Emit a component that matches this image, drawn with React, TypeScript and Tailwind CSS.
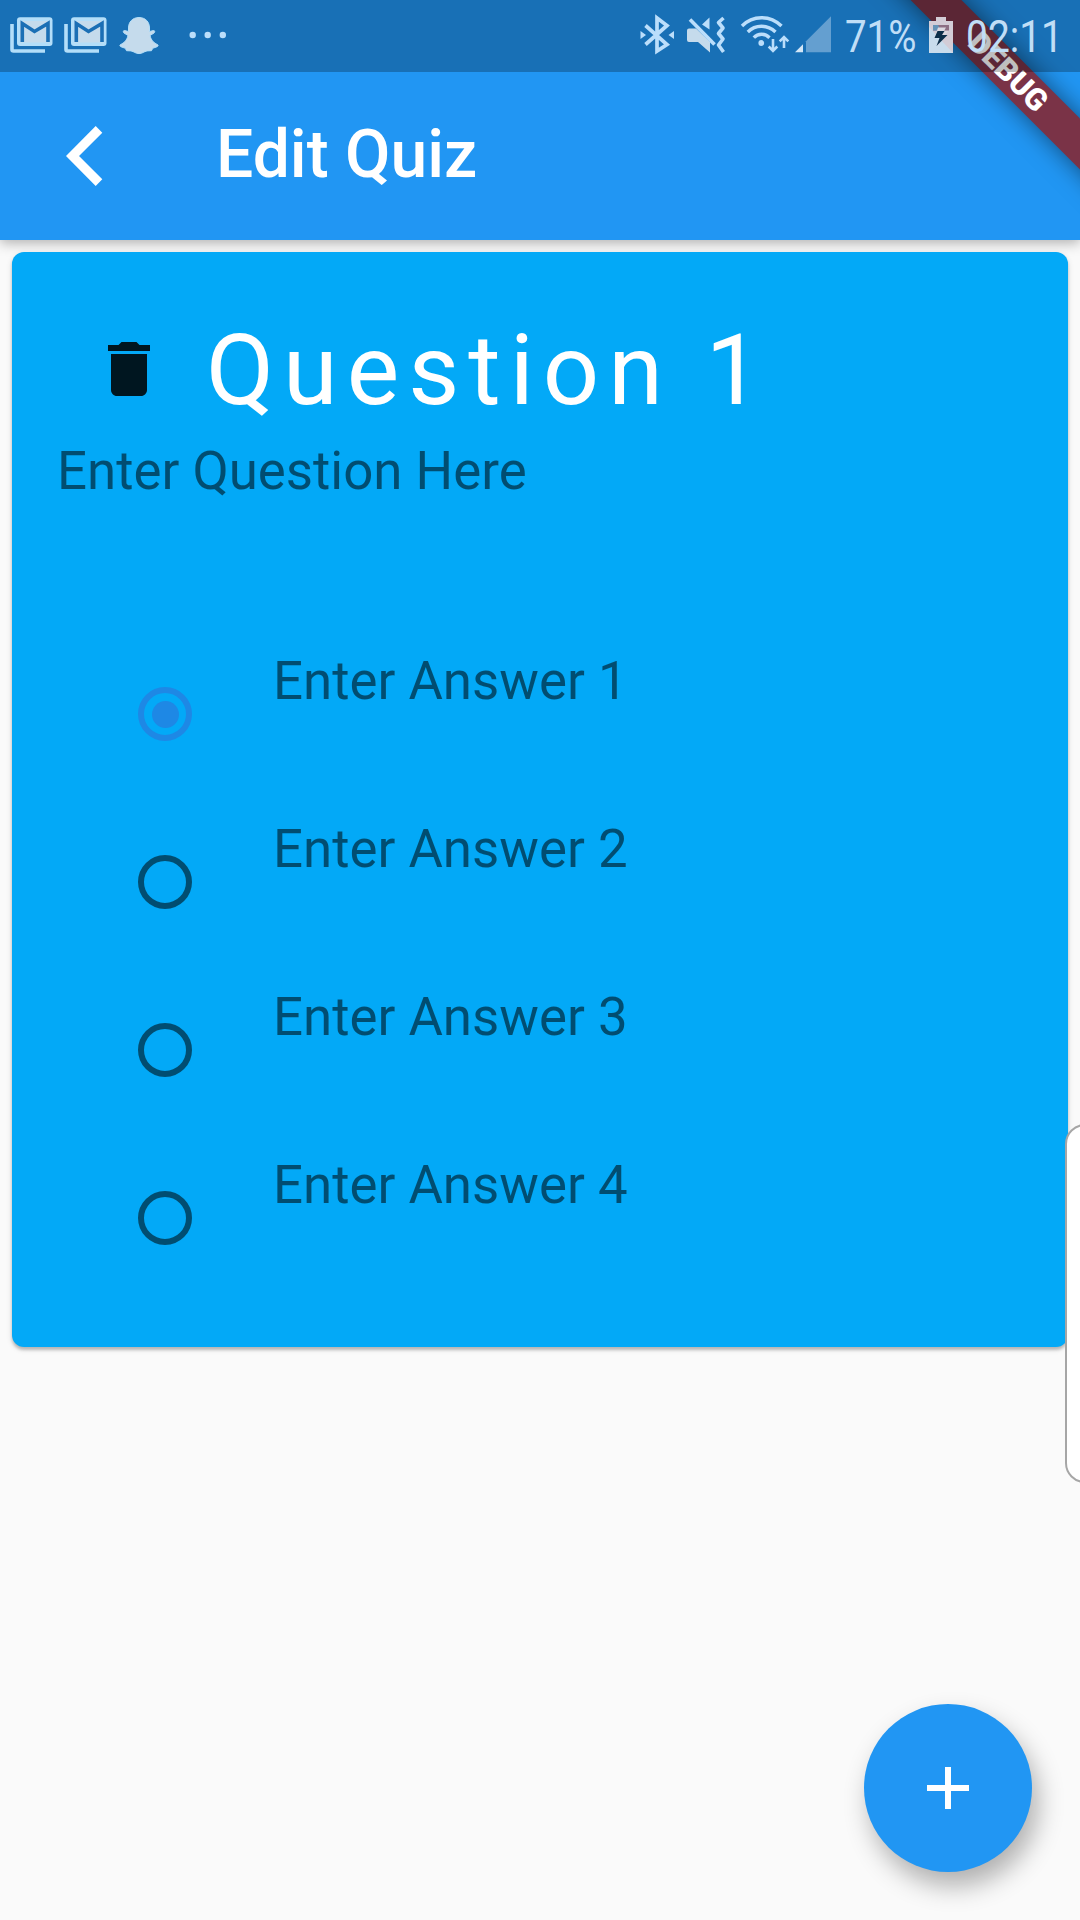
import React from "react";

function GmailIcon() {
  return (
    <svg width="54" height="72" viewBox="8 0 54 72" className="shrink-0">
      <path d="M12 24V49.500q0 1.500 1.500 1.500H45" fill="none" stroke="#b3def9" strokeWidth="3.600" />
      <rect x="17" y="17.200" width="35.500" height="28.800" rx="3" fill="#b3def9" />
      <rect x="20" y="21" width="30" height="21.500" fill="#c5dbec" />
      <path d="M22.300 42V23.500L34.500 31.500L48 23.500V42" fill="none" stroke="#1b6fb5" strokeWidth="3.600" />
    </svg>
  );
}

function SnapIcon() {
  return (
    <svg width="72" height="72" viewBox="116 0 72 72" className="shrink-0">
      <path
        d="M139 17.500c-6.500 0-10.500 4.500-10.500 10.500v3.500l-4-1c-1.500 0-1.500 1.500-.5 2.500l4 2.500c-1.200 5-4 7.500-7.500 9-1 .6-.7 1.600.3 2.200l4.500 1.600 1.200 2.400 4.500.2c3 .6 4.500 2.700 8 2.700s5-2.100 8-2.700l4.500-.2 1.200-2.400 4.500-1.600c1-.6 1.300-1.600.3-2.200-3.500-1.500-6.300-4-7.500-9l4-2.500c1-1 1-2.500-.5-2.500l-4 1V28c0-6-4-10.500-10.500-10.500z"
        fill="#c5dbec"
        stroke="#b3def9"
        strokeWidth="1"
      />
    </svg>
  );
}

function DotsIcon() {
  return (
    <svg width="40" height="72" viewBox="188 0 40 72" className="shrink-0" fill="#bbdefb">
      <circle cx="192.700" cy="35" r="3.200" />
      <circle cx="207.700" cy="35" r="3.200" />
      <circle cx="222.800" cy="35" r="3.200" />
    </svg>
  );
}

function BluetoothIcon() {
  return (
    <svg width="44" height="72" viewBox="638 0 44 72" className="shrink-0">
      <path d="M645.500 25.500L667 44.500L657 51V18L667 25.500L645.500 44.500" fill="none" stroke="#bbdefb" strokeWidth="3.700" />
      <path d="M640.500 31l5.500 4-5.500 4zM674 31l-5.500 4 5.500 4z" fill="#bbdefb" />
    </svg>
  );
}

function MuteIcon() {
  return (
    <svg width="54" height="72" viewBox="682 0 54 72" className="shrink-0">
      <path d="M689 28.500H696L710 42V52.500L698 42H689Q687 42 687 40V30.500Q687 28.500 689 28.500z" fill="#c5dbec" />
      <path d="M702 24.500L709.500 17.500V29.500z" fill="#bbdefb" />
      <path d="M690 19.500L714.500 44.500" stroke="#bbdefb" strokeWidth="3.600" />
      <path d="M723.500 18L718.500 22.500L723 28L718.500 33.500L723 39L718.500 45L723.500 52" fill="none" stroke="#bbdefb" strokeWidth="3.600" strokeLinejoin="round" />
    </svg>
  );
}

function WifiIcon() {
  return (
    <svg width="56" height="72" viewBox="736 0 56 72" className="shrink-0" fill="none" stroke="#bbdefb" strokeWidth="3.400">
      <path d="M742 26Q750 17.700 761.500 17.700T781.500 26" />
      <path d="M747.800 32Q753.500 26.300 761.500 26.300T775.500 32" />
      <path d="M753.800 37.700Q757 34.300 761.500 34.300T769.500 37.700" />
      <circle cx="761.300" cy="43" r="2.900" fill="#bbdefb" stroke="none" />
      <path d="M773 39V51M768.700 46.500L773 50.800L777.300 46.500" strokeWidth="2.600" />
      <path d="M784 48V37M779.700 41.300L784 37L788.300 41.300" strokeWidth="2.600" />
    </svg>
  );
}

function SignalIcon() {
  return (
    <svg width="52" height="72" viewBox="792 0 52 72" className="shrink-0">
      <path d="M795 52.300L803 44.300V52.300z" fill="#d3e6f6" />
      <path d="M806 52.300V41.300L831 16.300V52.300z" fill="#649fd0" />
    </svg>
  );
}

function BatteryIcon() {
  return (
    <svg width="28" height="72" viewBox="927 0 28 72" className="shrink-0">
      <path d="M936 17H946V21H953V53H929V21H936z" fill="#c9dcec" />
      <path d="M936 17H946V21H953V53L929 27V21H936z" fill="#d3ccd6" />
      <path d="M933 25H949V30.500H933z" fill="#8d6f84" />
      <path d="M933 25H938L941 30.500H933z" fill="#6493b8" />
      <path d="M938 27.500H946L944 31H948L937.500 46.500L940.500 37.500H934.500z" fill="#dcd8e0" />
      <path d="M937.500 31H944.500L942 35H947.500L936.500 46L939.500 38H934.500z" fill="#0d2f4a" />
    </svg>
  );
}

function StatusBar() {
  return (
    <div className="relative z-20 flex h-[72px] items-center bg-black/25 pl-2 text-[45px] leading-none text-[#c0def6]">
      <GmailIcon />
      <GmailIcon />
      <SnapIcon />
      <DotsIcon />
      <div className="grow" />
      <BluetoothIcon />
      <MuteIcon />
      <WifiIcon />
      <SignalIcon />
      <span className="block w-[83px] origin-left translate-x-[1px] scale-x-[0.855] whitespace-nowrap pt-[1px]">71%</span>
      <BatteryIcon />
      <span className="ml-[10px] block w-[115px] origin-left translate-x-[1px] scale-x-[0.865] whitespace-nowrap pt-[1px]">02:11</span>
    </div>
  );
}

function DebugBanner() {
  return (
    <div className="absolute right-0 top-0 z-10 h-[240px] w-[240px] overflow-hidden">
      <div className="absolute left-[-12px] top-[54px] flex h-9 w-[360px] rotate-45 items-center justify-center bg-[#7a3347] text-[30.600px] font-black leading-none text-white shadow-[0_0_24px_rgba(0,0,0,0.5)]">
        DEBUG
      </div>
    </div>
  );
}

function Radio({ selected }: { selected: boolean }) {
  return (
    <span
      className={
        selected
          ? "flex h-[54px] w-[54px] items-center justify-center rounded-full border-[6px] border-[#1e88e5]"
          : "block h-[54px] w-[54px] rounded-full border-[6px] border-black/54"
      }
    >
      {selected && <span className="block h-[27px] w-[27px] rounded-full bg-[#1e88e5]" />}
    </span>
  );
}

const answers = ["Enter Answer 1", "Enter Answer 2", "Enter Answer 3", "Enter Answer 4"];

function QuestionCard() {
  return (
    <section className="mx-3 mt-3 h-[1095px] rounded-xl bg-[#03a9f7] shadow-[0_3px_3px_rgba(0,0,0,0.2),0_2px_6px_rgba(0,0,0,0.12)]">
      <div className="flex h-[180px] items-start pl-[81px] pt-[60px]">
        <svg width="72" height="72" viewBox="0 0 24 24" className="mt-[21px] shrink-0" fill="#000" fillOpacity="0.87">
          <path d="M6 19c0 1.100.9 2 2 2h8c1.100 0 2-.9 2-2V7H6v12zM19 4h-3.500l-1-1h-5l-1 1H5v2h14V4z" />
        </svg>
        <h2 className="ml-[41px] whitespace-nowrap text-[99px] leading-[116px] tracking-[9px] text-white">Question 1</h2>
      </div>
      <p className="ml-[45px] mt-2 h-[198px] text-[52.800px] leading-[62px] text-black/54">Enter Question Here</p>
      <ul>
        {answers.map((answer, i) => (
          <li key={answer} className="flex h-[168px] items-start pl-[126px]">
            <div className="pt-[49px]">
              <Radio selected={i === 0} />
            </div>
            <span className="ml-[81px] mt-3 text-[52.800px] leading-[62px] text-black/54">{answer}</span>
          </li>
        ))}
      </ul>
    </section>
  );
}

export default function App() {
  return (
    <div className="relative h-[1920px] w-[1080px] overflow-hidden bg-[#fafafa] font-['Roboto',sans-serif]">
      <header className="relative h-[240px] bg-[#2196f3] shadow-[0_3px_12px_rgba(0,0,0,0.3)]">
        <StatusBar />
        <div className="flex h-[168px] items-center pl-[66px]">
          <svg width="72" height="72" viewBox="66 120 72 72" className="shrink-0" fill="#fff">
            <path d="M95.700 126L102.300 132.700L79 156L102.300 179.300L95.700 186L66 156z" />
          </svg>
          <h1 className="-mt-[3px] ml-[78px] text-[66px] font-medium leading-none text-white">Edit Quiz</h1>
        </div>
        <DebugBanner />
      </header>
      <main className="relative">
        <QuestionCard />
      </main>
      <div className="absolute left-[1065px] top-[1124px] h-[359px] w-[40px] rounded-[20px] border-2 border-[#a6a6a6] bg-white" />
      <button className="absolute bottom-12 right-12 flex h-[168px] w-[168px] items-center justify-center rounded-full bg-[#2196f3] shadow-[6px_14px_26px_rgba(0,0,0,0.3)]">
        <svg width="72" height="72" viewBox="0 0 24 24" fill="#fff">
          <path d="M19 13h-6v6h-2v-6H5v-2h6V5h2v6h6v2z" />
        </svg>
      </button>
    </div>
  );
}
